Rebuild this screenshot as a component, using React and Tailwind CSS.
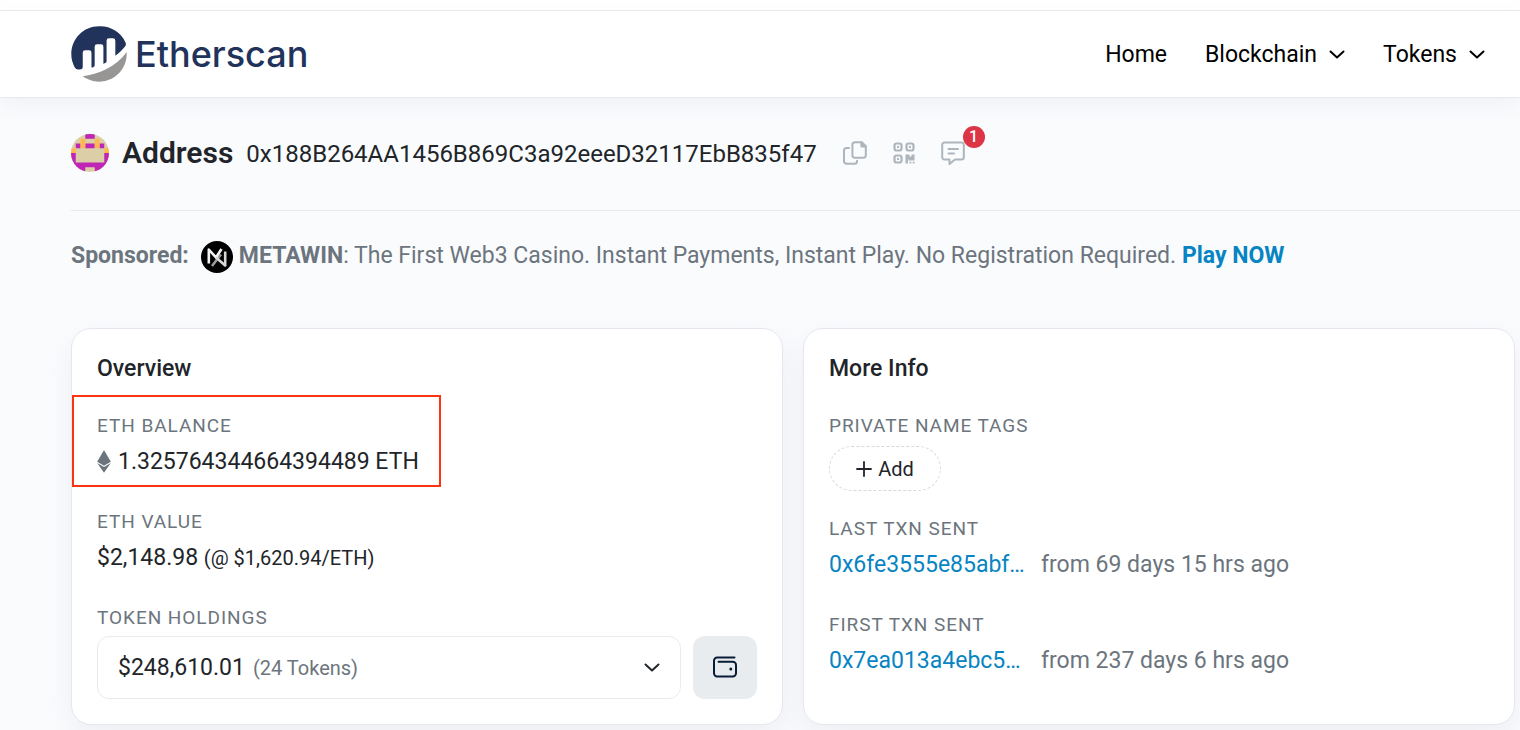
import React from "react";

function EtherscanMark() {
  return (
    <svg viewBox="0 0 123 123" className="size-14 shrink-0" aria-hidden="true">
      <path
        fill="#21325b"
        d="M25.79 58.41a5.24 5.24 0 0 1 5.25-5.25l8.7.03a5.24 5.24 0 0 1 5.24 5.24v32.93c.98-.29 2.24-.6 3.61-.92a4.37 4.37 0 0 0 3.37-4.26V45.34a5.24 5.24 0 0 1 5.24-5.24h8.73a5.24 5.24 0 0 1 5.24 5.24v37.92s2.19-.89 4.31-1.78a4.37 4.37 0 0 0 2.67-4.03V32.26a5.24 5.24 0 0 1 5.24-5.24h8.73a5.24 5.24 0 0 1 5.24 5.24v32.86c7.57-5.49 15.23-12.08 21.32-20.02a8.79 8.79 0 0 0 1.33-8.2A60.82 60.82 0 0 0 62.76.67C28.72-.24.66 27.46.66 61.5a60.74 60.74 0 0 0 8.07 30.41 7.77 7.77 0 0 0 7.42 3.84c1.64-.14 3.69-.35 6.12-.63a4.36 4.36 0 0 0 3.52-4.33z"
      />
      <path
        fill="#979695"
        d="M25.6 110.51A60.84 60.84 0 0 0 122.33 61.49c0-1.4-.07-2.78-.16-4.16-22.23 33.15-63.27 48.65-96.57 53.18z"
      />
    </svg>
  );
}

function Chevron() {
  return (
    <svg viewBox="0 0 16 16" className="size-4 shrink-0" fill="none" stroke="currentColor" strokeWidth="2" strokeLinecap="round" strokeLinejoin="round" aria-hidden="true">
      <path d="M1.500 4.500 8 10.500l6.500-6" />
    </svg>
  );
}

const TAN = "#dccfa8";
const PURPLE = "#bf26b5";
const ORANGE = "#ffb84f";

function Blockie() {
  return (
    <svg viewBox="0 0 8 8" className="size-[38px] shrink-0 rounded-full" aria-hidden="true">
      <rect width="8" height="8" fill={TAN} />
      <path fill={PURPLE} d="M3 0h2v1H3zM1 2h1v1H1zM3 2h2v1H3zM6 2h1v1H6zM0 4h1v2H0zM7 4h1v2H7zM0 6h8v2H5V7H3v1H0z" />
      <path fill={ORANGE} d="M2 1h1v2H2zM5 1h1v2H5zM0 3h1v1H0zM7 3h1v1H7z" />
    </svg>
  );
}

function CopyIcon() {
  return (
    <svg viewBox="0 0 24 24" className="size-6" fill="none" stroke="currentColor" strokeWidth="2" strokeLinejoin="round" strokeLinecap="round" aria-hidden="true">
      <path d="M12 1.200h6.800l4 4v9a2.600 2.600 0 0 1-2.600 2.600H12a2.600 2.600 0 0 1-2.600-2.600V3.800A2.600 2.600 0 0 1 12 1.200z" />
      <path d="M18.400 1.400v4.200h4.200z" fill="currentColor" />
      <path d="M6 7H3.600A2.600 2.600 0 0 0 1 9.600v10.600a2.600 2.600 0 0 0 2.600 2.600h7.800a2.600 2.600 0 0 0 2.600-2.600v-.4" />
    </svg>
  );
}

function QrIcon() {
  return (
    <svg viewBox="0 0 22 22" className="size-[22px]" fill="none" stroke="currentColor" strokeWidth="2.200" aria-hidden="true">
      <rect x="1.500" y="1.500" width="7" height="7" rx="2" />
      <rect x="13.500" y="1.500" width="7" height="7" rx="2" />
      <rect x="1.500" y="13.500" width="7" height="7" rx="2" />
      <g fill="currentColor" stroke="none">
        <rect x="4" y="4" width="2" height="2" />
        <rect x="16" y="4" width="2" height="2" />
        <rect x="4" y="16" width="2" height="2" />
        <path d="M12.500 12.500h4v2h2v-2h3v6h-6v-1.500h-.5v4.500h-2.500z" />
        <rect x="16.500" y="19.700" width="1.800" height="1.800" />
        <rect x="19.700" y="19.700" width="1.800" height="1.800" />
      </g>
    </svg>
  );
}

function CommentIcon() {
  return (
    <svg viewBox="0 0 24 24" className="size-6" fill="none" stroke="currentColor" strokeWidth="2" strokeLinecap="round" strokeLinejoin="round" aria-hidden="true">
      <path d="M3.400 1.500h17.200a2.200 2.200 0 0 1 2.200 2.200v12.600a2.200 2.200 0 0 1-2.200 2.200H14L8.500 23v-4.500H3.400a2.200 2.200 0 0 1-2.200-2.200V3.700a2.200 2.200 0 0 1 2.200-2.200z" />
      <path d="M7.500 8h9.500M7.500 12.500h5.500" />
    </svg>
  );
}

function MetawinLogo() {
  return (
    <svg viewBox="0 0 32 32" className="mt-0.5 size-8 shrink-0" aria-hidden="true">
      <circle cx="16" cy="16" r="16" fill="#000" />
      <g fill="none" strokeWidth="2.600" strokeLinejoin="round">
        <path stroke="#9a9a9a" d="m11 25 5-6.500 4-5" />
        <path stroke="#f4f4f4" d="M7.800 22.500V8.500l7.200 8 5.500-8.500" />
        <path stroke="#d8d8d8" d="m15 16.500 9.200 8V10.500" />
      </g>
    </svg>
  );
}

function EthGlyph() {
  return (
    <svg viewBox="0 0 14 23" className="mb-0.5 h-[23px] w-[14px] shrink-0" fill="#6c757d" aria-hidden="true">
      <path d="M7 0 13.800 11.700 7 15.700.2 11.700z" />
      <path d="M7 17 13.800 13 7 22.800.2 13z" />
    </svg>
  );
}

function WalletIcon() {
  return (
    <svg viewBox="0 0 24 22" className="mb-0.5 h-[22px] w-6" fill="none" stroke="currentColor" strokeWidth="2" strokeLinecap="round" strokeLinejoin="round" aria-hidden="true">
      <path d="M21.500 1.500H4.200A3.200 3.200 0 0 0 1 4.700v12.600a3.200 3.200 0 0 0 3.200 3.200h15.600a3.200 3.200 0 0 0 3.200-3.200V8.900a3.200 3.200 0 0 0-3.200-3.200H5.500" />
      <circle cx="17.800" cy="13" r="1.500" fill="currentColor" stroke="none" />
    </svg>
  );
}

function NavMenu({ children }) {
  return (
    <button type="button" aria-haspopup="menu" className="flex items-center gap-3">
      {children}
      <Chevron />
    </button>
  );
}

function Card({ title, children }) {
  return (
    <section className="rounded-[20px] border border-[#e4e8ee] bg-white p-[25px] shadow-[0_12px_28px_rgba(189,197,209,0.2)]">
      <h2 className="text-[23px] leading-[30px] font-medium">{title}</h2>
      <div className="mt-7 flex flex-col gap-6">{children}</div>
    </section>
  );
}

function Label({ children }) {
  return <h3 className="text-[19px] leading-7 tracking-wider text-[#6c757d] uppercase">{children}</h3>;
}

function Txn({ label, hash, age }) {
  return (
    <div>
      <Label>{label}</Label>
      <p className="flex gap-3.5 leading-[44px] text-[#6c757d]">
        <a href="#" className="w-[198px] text-[#0784c3]">{hash}</a>
        <span>{age}</span>
      </p>
    </div>
  );
}

export default function App() {
  return (
    <div className="min-h-screen overflow-x-hidden bg-[#fafbfd] font-[Roboto,'Liberation_Sans',sans-serif] text-[23px] leading-8 text-[#212529]">
      <div className="h-2.5 bg-white" />
      <header className="relative flex h-[88px] items-center justify-between border-y border-[#e7eaed] bg-white pr-[35px] pl-[71px] shadow-[0_8px_20px_rgba(189,197,209,0.15)]">
        <a href="#" className="flex items-center gap-2 font-[Inter,sans-serif] text-4xl font-medium text-[#21325b]">
          <EtherscanMark />
          Etherscan
        </a>
        <nav className="flex items-center gap-[38px] pt-0.5 text-black">
          <a href="#">Home</a>
          <NavMenu>Blockchain</NavMenu>
          <NavMenu>Tokens</NavMenu>
        </nav>
      </header>

      <main className="pl-[71px]">
        <div className="flex h-[113px] items-center border-b border-[#e7eaed] pb-0.5">
          <Blockie />
          <h1 className="ml-[13px] text-[30px] font-semibold">Address</h1>
          <span className="ml-[13px] pt-0.5 text-2xl">0x188B264AA1456B869C3a92eeeD32117EbB835f47</span>
          <div className="ml-[26px] flex items-center gap-[26px] text-[#adb5bd]">
            <button type="button" aria-label="Copy address"><CopyIcon /></button>
            <button type="button" aria-label="Show QR code"><QrIcon /></button>
            <button type="button" aria-label="Comments" className="relative">
              <CommentIcon />
              <span className="absolute -top-[15px] -right-5 flex size-[22px] items-center justify-center rounded-full bg-[#dc3545] text-base leading-none font-medium text-white">1</span>
            </button>
          </div>
        </div>

        <p className="mt-7 flex items-center text-[#6c757d]">
          <strong className="mr-3">Sponsored:</strong>
          <MetawinLogo />
          <span className="ml-1.5">
            <strong>METAWIN</strong>: The First Web3 Casino. Instant Payments, Instant Play. No Registration Required.{" "}
            <a href="#" className="font-bold text-[#0784c3]">Play NOW</a>
          </span>
        </p>

        <div className="mt-[55px] mr-[5px] grid grid-cols-2 gap-5">
          <Card title="Overview">
            <div className="relative">
              <Label>ETH Balance</Label>
              <p className="flex items-center gap-[7px] leading-[44px]">
                <EthGlyph />
                1.325764344664394489 ETH
              </p>
              <div className="pointer-events-none absolute -top-[17px] -left-[25px] h-[92px] w-[369px] border-2 border-[#fb3310]" />
            </div>
            <div>
              <Label>ETH Value</Label>
              <p className="leading-[44px]">
                $2,148.98 <span className="text-xl">(@ $1,620.94/ETH)</span>
              </p>
            </div>
            <div>
              <Label>Token Holdings</Label>
              <div className="mt-1 flex gap-3">
                <button type="button" aria-haspopup="listbox" className="flex h-[63px] grow items-center rounded-xl border border-[#e9ecef] px-5">
                  $248,610.01
                  <span className="ml-2 text-xl text-[#6c757d]">(24 Tokens)</span>
                  <span className="ml-auto"><Chevron /></span>
                </button>
                <button type="button" aria-label="View wallet holdings" className="flex h-[63px] w-16 items-center justify-center rounded-xl bg-[#e9ecef] text-[#081d35]">
                  <WalletIcon />
                </button>
              </div>
            </div>
          </Card>

          <Card title="More Info">
            <div>
              <Label>Private Name Tags</Label>
              <button type="button" className="mt-1.5 flex h-[45px] w-28 items-center justify-center gap-1.5 rounded-full border border-dashed border-[#d5d9dd] text-xl">
                <svg viewBox="0 0 16 16" className="size-4" fill="none" stroke="currentColor" strokeWidth="1.800" strokeLinecap="round" aria-hidden="true">
                  <path d="M8 1v14M1 8h14" />
                </svg>
                Add
              </button>
            </div>
            <Txn label="Last Txn Sent" hash="0x6fe3555e85abf…" age="from 69 days 15 hrs ago" />
            <Txn label="First Txn Sent" hash="0x7ea013a4ebc5…" age="from 237 days 6 hrs ago" />
          </Card>
        </div>
      </main>
    </div>
  );
}
